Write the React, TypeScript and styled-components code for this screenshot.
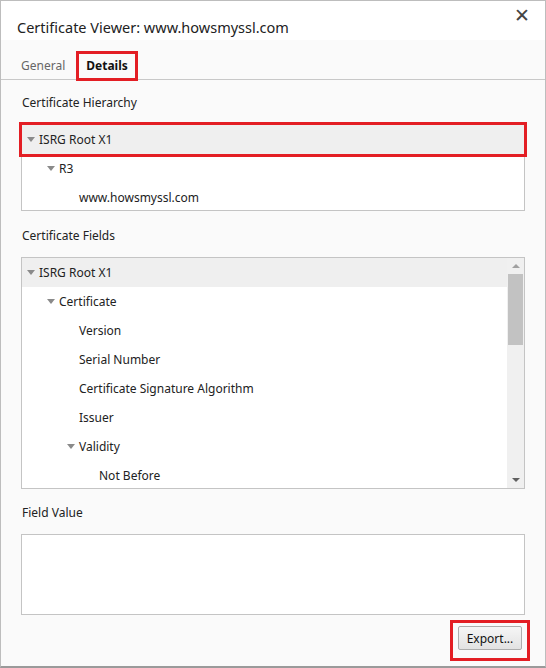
import React from 'react';
import styled, { createGlobalStyle } from 'styled-components';

const Global = createGlobalStyle`
  html, body { margin: 0; padding: 0; background: #fafafa; }
  body { font-family: "Segoe UI", "Noto Sans", sans-serif; font-size: 12px; color: #222; }
`;

const Dialog = styled.div`
  width: 546px;
  height: 668px;
  box-sizing: border-box;
  border: 1px solid #bdbdbd;
  border-bottom: 2px solid #9a9a9a;
  background: #fafafa;
  display: flex;
  flex-direction: column;
`;

const Header = styled.div`
  height: 39px;
  background: #fff;
  position: relative;
  padding: 16px 0 0 16px;
  box-sizing: border-box;
  font-size: 14.5px;
  color: #222;
`;

const Close = styled.div`
  position: absolute;
  right: 15px;
  top: 3px;
  font-size: 19px;
  color: #444;
  font-family: "DejaVu Sans", sans-serif;
`;

const Tabs = styled.div`
  display: flex;
  align-items: flex-end;
  height: 40px;
  border-bottom: 1px solid #c8c8c8;
  padding-left: 15px;
  box-sizing: border-box;
`;

const Tab = styled.div<{ $active?: boolean }>`
  height: 26px;
  line-height: 26px;
  box-sizing: border-box;
  padding: ${p => (p.$active ? '0 8px' : '0 5px')};
  margin-right: ${p => (p.$active ? '0' : '8px')};
  font-weight: ${p => (p.$active ? 700 : 400)};
  color: ${p => (p.$active ? '#111' : '#666')};
  outline: ${p => (p.$active ? '3px solid #e31e24' : 'none')};
  outline-offset: -1px;
`;

const Body = styled.div`
  padding: 0 20px;
  display: flex;
  flex-direction: column;
`;

const Label = styled.div<{ $top?: number }>`
  margin: ${p => p.$top ?? 15}px 0 13px 1px;
  line-height: 16px;
`;

const Box = styled.div<{ $h: number; $clip?: boolean }>`
  height: ${p => p.$h}px;
  background: #fff;
  border: 1px solid #c4c4c4;
  box-sizing: border-box;
  position: relative;
  overflow: ${p => (p.$clip ? 'hidden' : 'visible')};
`;

const Row = styled.div<{ $level: number; $sel?: boolean; $outlined?: boolean }>`
  height: 29px;
  display: flex;
  align-items: center;
  padding-left: ${p => 5 + p.$level * 20}px;
  background: ${p => (p.$sel ? '#efefef' : 'transparent')};
  position: relative;
  outline: ${p => (p.$outlined ? '3px solid #e31e24' : 'none')};
`;

const Arrow = styled.span<{ $show: boolean }>`
  width: 0;
  height: 0;
  border-left: 4px solid transparent;
  border-right: 4px solid transparent;
  border-top: 5px solid ${p => (p.$show ? '#8a8a8a' : 'transparent')};
  margin-right: 4px;
`;

const Scrollbar = styled.div`
  position: absolute;
  right: 0;
  top: 0;
  bottom: 0;
  width: 17px;
  background: #f0f0f0;
`;

const Thumb = styled.div`
  position: absolute;
  left: 1px;
  right: 1px;
  top: 16px;
  height: 71px;
  background: #c2c2c2;
`;

const ScrollArrow = styled.div<{ $up?: boolean }>`
  position: absolute;
  left: 5px;
  ${p => (p.$up ? 'top: 6px;' : 'bottom: 6px;')}
  width: 0;
  height: 0;
  border-left: 4px solid transparent;
  border-right: 4px solid transparent;
  ${p => (p.$up ? 'border-bottom: 4px solid #a0a0a0;' : 'border-top: 4px solid #606060;')}
`;

const Footer = styled.div`
  display: flex;
  justify-content: flex-end;
  padding: 5px 15px 0 0;
`;

const ExportWrap = styled.div`
  border: 3px solid #e31e24;
  padding: 3px 5px 8px 5px;
`;

const Button = styled.button`
  font-family: inherit;
  font-size: 12px;
  color: #111;
  width: 64px;
  height: 24px;
  border: 1px solid #adadad;
  border-radius: 2px;
  background: linear-gradient(#f6f6f6, #e2e2e2);
  padding: 0;
`;

const hierarchy = [
  { t: 'ISRG Root X1', l: 0, a: true },
  { t: 'R3', l: 1, a: true },
  { t: 'www.howsmyssl.com', l: 2, a: false },
];

const fields = [
  { t: 'ISRG Root X1', l: 0, a: true },
  { t: 'Certificate', l: 1, a: true },
  { t: 'Version', l: 2, a: false },
  { t: 'Serial Number', l: 2, a: false },
  { t: 'Certificate Signature Algorithm', l: 2, a: false },
  { t: 'Issuer', l: 2, a: false },
  { t: 'Validity', l: 2, a: true },
  { t: 'Not Before', l: 3, a: false },
];

const App: React.FC = () => (
  <>
    <Global />
    <Dialog>
      <Header>
        Certificate Viewer: www.howsmyssl.com
        <Close>✕</Close>
      </Header>
      <Tabs>
        <Tab>General</Tab>
        <Tab $active>Details</Tab>
      </Tabs>
      <Body>
        <Label>Certificate Hierarchy</Label>
        <Box $h={87}>
          {hierarchy.map((r, i) => (
            <Row key={i} $level={r.l} $sel={i === 0} $outlined={i === 0}>
              <Arrow $show={r.a} />
              {r.t}
            </Row>
          ))}
        </Box>
        <Label $top={17}>Certificate Fields</Label>
        <Box $h={232} $clip>
          {fields.map((r, i) => (
            <Row key={i} $level={r.l} $sel={i === 0}>
              <Arrow $show={r.a} />
              {r.t}
            </Row>
          ))}
          <Scrollbar>
            <ScrollArrow $up />
            <Thumb />
            <ScrollArrow />
          </Scrollbar>
        </Box>
        <Label $top={16}>Field Value</Label>
        <Box $h={81} />
      </Body>
      <Footer>
        <ExportWrap>
          <Button>Export...</Button>
        </ExportWrap>
      </Footer>
    </Dialog>
  </>
);

export default App;
